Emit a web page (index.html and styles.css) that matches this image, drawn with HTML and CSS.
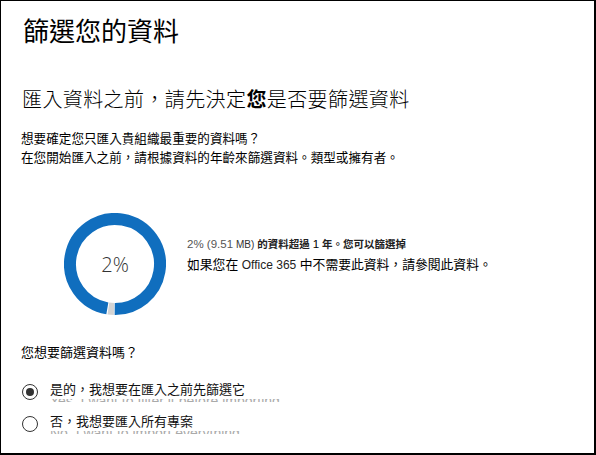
FILE: index.html
```html
<!DOCTYPE html>
<html lang="zh-Hant">
<head>
<meta charset="utf-8">
<link rel="stylesheet" href="styles.css">
</head>
<body>
<div class="frame">
  <h1 class="title">篩選您的資料</h1>
  <h2 class="subtitle">匯入資料之前，請先決定<b>您</b>是否要篩選資料</h2>
  <p class="intro">想要確定您只匯入貴組織最重要的資料嗎？<br>在您開始匯入之前，請根據資料的年齡來篩選資料。類型或擁有者。</p>
  <div class="stats">
    <div class="donut">
      <svg width="102" height="102" viewBox="0 0 102 102">
        <circle cx="51" cy="51" r="45" fill="none" stroke="#106ebe" stroke-width="12" stroke-dasharray="274.9 400" transform="rotate(99.8 51 51)"/>
        <circle cx="51" cy="51" r="45" fill="none" stroke="#d4d4d4" stroke-width="12" stroke-dasharray="5.65 400" transform="rotate(91.3 51 51)"/>
      </svg>
      <span class="donut-label">2%</span>
    </div>
    <div class="stats-text">
      <div class="line1"><span class="lat">2% (9.51</span> <span class="lat mb">MB)</span> <b>的資料超過</b> <span class="lat one">1</span> <b>年。您可以篩選掉</b></div>
      <div class="line2">如果您在 <span class="lat">Office 365</span> 中不需要此資料，請參閱此資料。</div>
    </div>
  </div>
  <p class="question">您想要篩選資料嗎？</p>
  <div class="options">
    <div class="option">
      <span class="radio checked"></span>
      <div class="opt-text">
        <div class="opt-label">是的，我想要在匯入之前先篩選它</div>
        <div class="ghost"><div class="ghost-inner">Yes, I want to filter it before importing</div></div>
      </div>
    </div>
    <div class="option">
      <span class="radio"></span>
      <div class="opt-text">
        <div class="opt-label">否，我想要匯入所有專案</div>
        <div class="ghost"><div class="ghost-inner">No, I want to import everything</div></div>
      </div>
    </div>
  </div>
</div>
</body>
</html>
```

FILE: styles.css
```css
* { box-sizing: border-box; }
html, body { margin: 0; padding: 0; background: #fff; }
body {
  font-family: "Liberation Sans", "Noto Sans CJK TC", sans-serif;
  color: #000;
}
.frame {
  width: 596px;
  height: 455px;
  border-top: 1px solid #000;
  border-left: 1px solid #000;
  border-right: 2px solid #000;
  border-bottom: 2px solid #000;
  padding: 0 0 0 20px;
  overflow: hidden;
}
.title {
  margin: 16px 0 0 2px;
  font-size: 26px;
  line-height: 30px;
  font-weight: 400;
}
.subtitle {
  margin: 41px 0 0 1px;
  font-size: 20px;
  line-height: 24px;
  font-weight: 300;
  letter-spacing: 0.4px;
}
.subtitle b { font-weight: 700; }
.intro {
  margin: 18px 0 0 0;
  font-size: 12.6px;
  line-height: 19px;
}
.stats {
  display: flex;
  align-items: flex-start;
  margin-top: 45px;
}
.donut {
  position: relative;
  width: 102px;
  height: 102px;
  margin-left: 43px;
}
.donut svg { display: block; }
.donut-label {
  position: absolute;
  left: 0;
  right: 0;
  top: 0;
  bottom: 0;
  display: flex;
  align-items: center;
  justify-content: center;
  font-family: "Open Sans", "Liberation Sans", sans-serif;
  font-weight: 300;
  font-size: 20px;
  color: #333;
}
.stats-text {
  margin-left: 21px;
  margin-top: 21px;
}
.line1 {
  font-size: 10.5px;
  line-height: 20px;
  color: #222;
}
.line1 .lat { color: #555; font-size: 11.5px; }
.line1 .mb { color: #333; font-size: 10px; }
.line1 .one { color: #000; }
.line1 b { font-weight: 700; }
.line2 {
  font-size: 12.8px;
  line-height: 20px;
}
.line2 .lat { font-size: 12px; color: #222; }
.question {
  margin: 28px 0 0 0;
  font-size: 13px;
  line-height: 19px;
}
.options {
  display: flex;
  flex-direction: column;
  gap: 11px;
  margin-top: 19px;
}
.option {
  display: flex;
  align-items: flex-start;
  gap: 12px;
  margin-left: 1px;
}
.radio {
  width: 16px;
  height: 16px;
  margin-top: 2.5px;
  border: 1.5px solid #333;
  border-radius: 50%;
  display: flex;
  align-items: center;
  justify-content: center;
  flex: none;
}
.radio.checked::after {
  content: "";
  width: 8px;
  height: 8px;
  border-radius: 50%;
  background: #333;
}
.opt-label {
  font-size: 13px;
  line-height: 18px;
  color: #111;
}
.ghost {
  height: 3px;
  margin-top: 0;
  overflow: hidden;
}
.ghost-inner {
  margin-top: -5px;
  font-size: 14px;
  line-height: 14px;
  color: #aaa;
  white-space: nowrap;
}
```
